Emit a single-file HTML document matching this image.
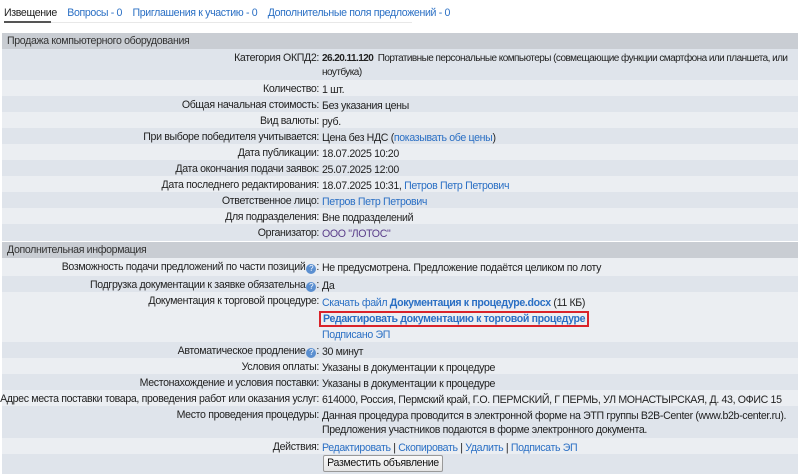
<!DOCTYPE html>
<html><head><meta charset="utf-8"><style>
*{margin:0;padding:0;box-sizing:border-box}
body{width:800px;height:476px;background:#fff;font-family:"Liberation Sans","Noto Sans CJK SC",sans-serif;font-size:10.6px;letter-spacing:-0.35px;color:#222;position:relative;overflow:hidden}
a{color:#2a6fc4;text-decoration:none}
.tabs{position:absolute;left:4px;top:7px;white-space:nowrap}
.tl{position:absolute;left:4px;top:22px;width:408px;height:1px;background:#e8e8e8}
.tu{position:absolute;left:4px;top:21px;width:47px;height:2px;background:#555}
.r{position:absolute;left:2px;width:796px;}
.h{background:#c9cdd3;padding-left:5px;line-height:17px;color:#333}
.d{background:#dfe4eb}.l{background:#ebeef2}
.k{position:absolute;right:479px;text-align:right;white-space:nowrap}
.v{position:absolute;left:320px;right:4px;line-height:14px}
.q{display:inline-block;width:10px;height:10px;border-radius:50%;background:#5b8fd0;color:#fff;font-size:8px;line-height:10px;text-align:center;vertical-align:-1px;margin-left:1px;letter-spacing:0}
.red{border:2px solid #d9232a;padding:0 2px;margin-left:-3px}
.btn{position:absolute;left:321px;top:1px;width:120px;height:17px;border:1px solid #999;background:linear-gradient(#fafafa,#e4e4e4);text-align:center;line-height:15px;color:#111;border-radius:2px;white-space:nowrap}
</style></head><body>
<div class="tabs"><span>Извещение</span>&nbsp;&nbsp;&nbsp; <a>Вопросы - 0</a>&nbsp;&nbsp;&nbsp; <a>Приглашения к участию - 0</a>&nbsp;&nbsp;&nbsp; <a>Дополнительные поля предложений - 0</a></div>
<div class="tl"></div><div class="tu"></div>

<div class="r h" style="top:33px;height:16px">Продажа компьютерного оборудования</div>
<div class="r d" style="top:49px;height:31px"><div class="k" style="top:3px">Категория ОКПД2:</div><div class="v" style="top:3px;right:auto;white-space:nowrap;font-size:10px;letter-spacing:-0.55px"><b>26.20.11.120</b>&nbsp; Портативные персональные компьютеры (совмещающие функции смартфона или планшета, или<br>ноутбука)</div></div>
<div class="r l" style="top:80px;height:16px"><div class="k" style="top:3px">Количество:</div><div class="v" style="top:3px">1 шт.</div></div>
<div class="r d" style="top:96px;height:16px"><div class="k" style="top:3px">Общая начальная стоимость:</div><div class="v" style="top:3px">Без указания цены</div></div>
<div class="r l" style="top:112px;height:16px"><div class="k" style="top:3px">Вид валюты:</div><div class="v" style="top:3px">руб.</div></div>
<div class="r d" style="top:128px;height:16px"><div class="k" style="top:3px">При выборе победителя учитывается:</div><div class="v" style="top:3px">Цена без НДС (<a>показывать обе цены</a>)</div></div>
<div class="r l" style="top:144px;height:16px"><div class="k" style="top:3px">Дата публикации:</div><div class="v" style="top:3px">18.07.2025 10:20</div></div>
<div class="r d" style="top:160px;height:16px"><div class="k" style="top:3px">Дата окончания подачи заявок:</div><div class="v" style="top:3px">25.07.2025 12:00</div></div>
<div class="r l" style="top:176px;height:16px"><div class="k" style="top:3px">Дата последнего редактирования:</div><div class="v" style="top:3px">18.07.2025 10:31, <a>Петров Петр Петрович</a></div></div>
<div class="r d" style="top:192px;height:16px"><div class="k" style="top:3px">Ответственное лицо:</div><div class="v" style="top:3px"><a>Петров Петр Петрович</a></div></div>
<div class="r l" style="top:208px;height:16px"><div class="k" style="top:3px">Для подразделения:</div><div class="v" style="top:3px">Вне подразделений</div></div>
<div class="r d" style="top:224px;height:17px"><div class="k" style="top:3px">Организатор:</div><div class="v" style="top:3px"><a style="color:#5a3d8a">ООО "ЛОТОС"</a></div></div>
<div class="r h" style="top:242px;height:16px">Дополнительная информация</div>
<div class="r l" style="top:258px;height:18px"><div class="k" style="top:3px">Возможность подачи предложений по части позиций<span class="q">?</span>:</div><div class="v" style="top:3px">Не предусмотрена. Предложение подаётся целиком по лоту</div></div>
<div class="r d" style="top:276px;height:16px"><div class="k" style="top:3px">Подгрузка документации к заявке обязательна<span class="q">?</span>:</div><div class="v" style="top:3px">Да</div></div>
<div class="r l" style="top:292px;height:50px"><div class="k" style="top:3px">Документация к торговой процедуре:</div><div class="v" style="top:3px;line-height:16px"><a>Скачать файл <b>Документация к процедуре.docx</b></a> (11 КБ)<br><span class="red"><a><b>Редактировать документацию к торговой процедуре</b></a></span><br><a>Подписано ЭП</a></div></div>
<div class="r d" style="top:342px;height:16px"><div class="k" style="top:3px">Автоматическое продление<span class="q">?</span>:</div><div class="v" style="top:3px">30 минут</div></div>
<div class="r l" style="top:358px;height:16px"><div class="k" style="top:3px">Условия оплаты:</div><div class="v" style="top:3px">Указаны в документации к процедуре</div></div>
<div class="r d" style="top:374px;height:16px"><div class="k" style="top:3px">Местонахождение и условия поставки:</div><div class="v" style="top:3px">Указаны в документации к процедуре</div></div>
<div class="r l" style="top:390px;height:16px"><div class="k" style="top:3px">Адрес места поставки товара, проведения работ или оказания услуг:</div><div class="v" style="top:3px;white-space:nowrap">614000, Россия, Пермский край, Г.О. ПЕРМСКИЙ, Г ПЕРМЬ, УЛ МОНАСТЫРСКАЯ, Д. 43, ОФИС 15</div></div>
<div class="r d" style="top:406px;height:32px"><div class="k" style="top:3px">Место проведения процедуры:</div><div class="v" style="top:3px;white-space:nowrap">Данная процедура проводится в электронной форме на ЭТП группы B2B-Center (www.b2b-center.ru).<br>Предложения участников подаются в форме электронного документа.</div></div>
<div class="r l" style="top:438px;height:16px"><div class="k" style="top:3px">Действия:</div><div class="v" style="top:3px"><a>Редактировать</a> | <a>Скопировать</a> | <a>Удалить</a> | <a>Подписать ЭП</a></div></div>
<div class="r d" style="top:454px;height:20px"><div class="btn">Разместить объявление</div></div>
</body></html>
